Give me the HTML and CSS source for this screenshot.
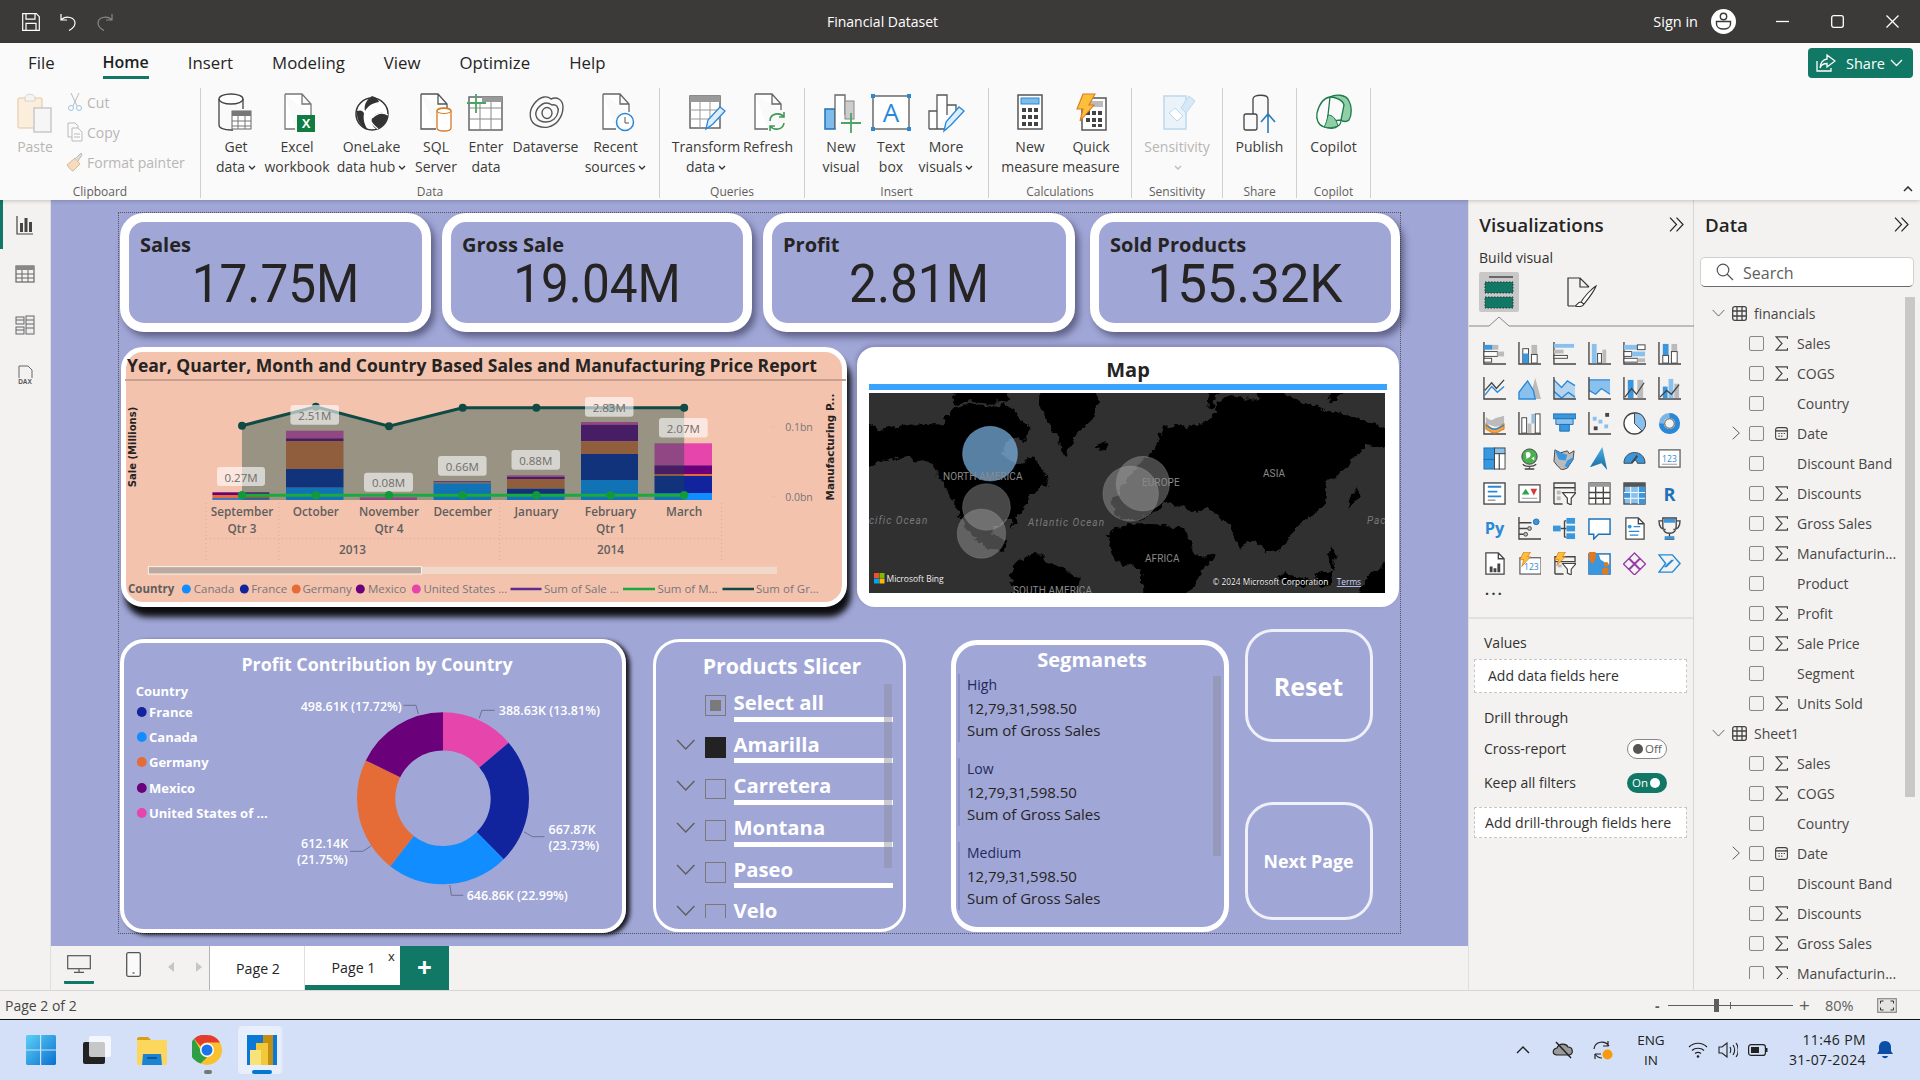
FILE: index.html
```html
<!DOCTYPE html>
<html lang="en">
<head>
<meta charset="utf-8">
<title>Financial Dataset - Power BI Desktop</title>
<link rel="stylesheet" href="styles.css">
</head>
<body>
<svg class="defs" aria-hidden="true">
  <symbol id="sig" viewBox="0 0 13 15"><path d="M12.5 3V.8H1l6 6.7L1 14.2h11.5V12" fill="none" stroke="#444" stroke-width="1.2"/></symbol>
  <symbol id="cal" viewBox="0 0 15 15"><rect x=".7" y=".7" width="13.6" height="13.6" rx="2.5" fill="none" stroke="#444" stroke-width="1.3"/><path d="M1 4.5h13" stroke="#444" stroke-width="1.6"/><path d="M4 7.5h1.5M7 7.5h1.5M10 7.5h1.5M4 10.5h1.5M7 10.5h1.5" stroke="#444" stroke-width="1.3"/></symbol>
  <symbol id="tbl" viewBox="0 0 15 15"><rect x=".7" y=".7" width="13.6" height="13.6" rx="2" fill="none" stroke="#444" stroke-width="1.3"/><path d="M.7 5h13.6M.7 10h13.6M5 .7v13.6M10 .7v13.6" stroke="#444" stroke-width="1.3"/></symbol>
  <symbol id="chr" viewBox="0 0 8 14"><path d="M.7.7 7.3 7 .7 13.3" fill="none" stroke="#605e5c" stroke-width="1"/></symbol>
  <symbol id="chd" viewBox="0 0 14 8"><path d="M.7.7 7 7.3 13.3.7" fill="none" stroke="#605e5c" stroke-width="1"/></symbol>
  <symbol id="dd" viewBox="0 0 8 6"><path d="M1 1l3 3 3-3" fill="none" stroke="#333" stroke-width="1.4"/></symbol>
  <symbol id="dbl" viewBox="0 0 15 15"><path d="M1 .7 7.5 7.5 1 14.3M7.5.7 14 7.5 7.5 14.3" fill="none" stroke="#252423" stroke-width="1.2"/></symbol>
</svg>

<header class="titlebar">
  <div class="qa">
    <svg class="qa-save" viewBox="0 0 18 18"><path d="M.7.7h13.6l3 3v13.6H.7zM4 .7v5.5h9V.7M4 17.3v-7h10v7" fill="none" stroke="#fff" stroke-width="1.2"/></svg>
    <svg class="qa-undo" viewBox="0 0 16 18"><path d="M1 1v6h6M1.5 6.5C6 2.5 15 4 15 10c0 3-2 5.500-6 7.500" fill="none" stroke="#fff" stroke-width="1.2"/></svg>
    <svg class="qa-redo" viewBox="0 0 16 18"><path d="M15 1v6H9M14.500 6.500C10 2.500 1 4 1 10c0 3 2 5.500 6 7.500" fill="none" stroke="#8a8886" stroke-width="1.2"/></svg>
  </div>
  <div class="doc-title">Financial Dataset</div>
  <div class="win">
    <span class="signin">Sign in</span>
    <svg class="avatar" viewBox="0 0 25 25"><circle cx="12.500" cy="12.500" r="12.500" fill="#fff"/><circle cx="12.500" cy="7.500" r="3.200" fill="none" stroke="#3b3a39" stroke-width="1.400"/><path d="M5.500 12.500h14v2.500c0 3-3 5-7 5s-7-2-7-5z" fill="none" stroke="#3b3a39" stroke-width="1.400"/></svg>
    <svg class="wc wc-min" viewBox="0 0 13 13"><path d="M0 6.500h13" stroke="#fff" stroke-width="1.300"/></svg>
    <svg class="wc wc-max" viewBox="0 0 13 13"><rect x=".7" y=".7" width="11.600" height="11.600" rx="2" fill="none" stroke="#fff" stroke-width="1.300"/></svg>
    <svg class="wc wc-x" viewBox="0 0 13 13"><path d="M.5.500l12 12M12.500.500l-12 12" stroke="#fff" stroke-width="1.300"/></svg>
  </div>
</header>

<section class="ribbon">
  <nav class="tabs">
    <span>File</span><span class="tab-on">Home</span><span>Insert</span><span>Modeling</span><span>View</span><span>Optimize</span><span>Help</span>
  </nav>
  <a class="share">
    <svg class="share-i" viewBox="0 0 20 18"><path d="M1 7v10h14v-3" fill="none" stroke="#fff" stroke-width="1.300"/><path d="M11 1l8 6-8 6v-3.500C7 9.500 5 11 4 14c0-5 3-8.500 7-9z" fill="none" stroke="#fff" stroke-width="1.300"/></svg>
    <span>Share</span>
    <svg class="share-c" viewBox="0 0 13 8"><path d="M1 1l5.500 5.500L12 1" fill="none" stroke="#fff" stroke-width="1.300"/></svg>
  </a>
  <div class="rb-body">
    <div class="grp g-clip">
      <div class="grp-main clip-main">
        <div class="rb rb-paste off">
          <svg class="ic" viewBox="0 0 36 40"><rect x="1" y="5" width="24" height="30" rx="2" fill="#fbeedd" stroke="#ecd5b8" stroke-width="1.500"/><path d="M8 5c0-5 10-5 10 0v3H8z" fill="#f7f3ee" stroke="#d8d4cf"/><rect x="17" y="15" width="17" height="24" fill="#f6f6f6" stroke="#c9c9c9" stroke-width="1.500"/></svg>
          <span>Paste</span>
        </div>
        <div class="clip-list off">
          <div class="clip-it"><svg class="ci" viewBox="0 0 16 20"><path d="M4 1l6 13M12 1L6 14" stroke="#bbb" fill="none"/><circle cx="4" cy="16" r="2.500" fill="none" stroke="#9cc3e4"/><circle cx="12" cy="16" r="2.500" fill="none" stroke="#9cc3e4"/></svg><span>Cut</span></div>
          <div class="clip-it"><svg class="ci" viewBox="0 0 16 20"><path d="M1 1h7l3 3v3M1 1v14h4" fill="none" stroke="#bbb"/><path d="M5 6h6l4 4v9H5zM7 12h6M7 15h6" fill="#fbfbfb" stroke="#bbb"/></svg><span>Copy</span></div>
          <div class="clip-it"><svg class="ci" viewBox="0 0 16 20"><path d="M0 13l8-7 5 6-7 7c-2-1-4-3-6-6z" fill="#f6dcbf" stroke="#dcb48a"/><path d="M9 6l5-5 1 2-4 6" fill="#ddd" stroke="#bbb"/></svg><span>Format painter</span></div>
        </div>
      </div>
      <div class="grp-name">Clipboard</div>
    </div>

    <div class="grp g-data">
      <div class="grp-main data-main">
        <div class="rb"><svg class="ic" viewBox="0 0 40 40"><ellipse cx="15" cy="6" rx="12" ry="5" fill="#fff" stroke="#444" stroke-width="1.300"/><path d="M3 6v26c0 3 5 5 12 5h2M27 6v10" fill="none" stroke="#444" stroke-width="1.300"/><rect x="16" y="18" width="19" height="18" fill="#fff" stroke="#666"/><rect x="16" y="18" width="19" height="5" fill="#777"/><path d="M16 28h19M16 33h19M22 23v13M29 23v13" stroke="#777"/></svg><span>Get<br>data<svg class="dd"><use href="#dd"/></svg></span></div>
        <div class="rb"><svg class="ic" viewBox="0 0 40 40"><path d="M8 1h17l9 10v12M8 1v35h10M25 1v10h9" fill="#fff" stroke="#777" stroke-width="1.300"/><rect x="20" y="22" width="18" height="17" fill="#107c41"/><text class="xl" x="29" y="35">X</text></svg><span>Excel<br>workbook</span></div>
        <div class="rb"><svg class="ic" viewBox="0 0 40 40"><circle cx="20" cy="21" r="16" fill="#fff" stroke="#333" stroke-width="1.500"/><path d="M20 3c-7 5-8 10-7 15 3-5 7-8 14-9-1-3-3-5-7-6zM5 18c-1 9 4 16 11 19-4-6-5-11-4-17-2-3-4-3-7-2zM36 22c-4-3-11-4-16 3-1 4 0 8 4 11 7-2 11-7 12-14z" fill="#333"/><path d="M14 18c2 7 5 13 12 18M20 25c5-5 11-6 16-3" fill="none" stroke="#fff" stroke-width="1.200"/></svg><span>OneLake<br>data hub<svg class="dd"><use href="#dd"/></svg></span></div>
        <div class="rb"><svg class="ic" viewBox="0 0 40 40"><path d="M5 1h17l9 10v7M5 1v35h15M22 1v10h9" fill="#fff" stroke="#555" stroke-width="1.300"/><path d="M21 18c0-4 14-4 14 0v17c0 4-14 4-14 0z" fill="#fff" stroke="#d97a21" stroke-width="1.300"/><ellipse cx="28" cy="18" rx="7" ry="2.500" fill="none" stroke="#d97a21"/></svg><span>SQL<br>Server</span></div>
        <div class="rb"><svg class="ic" viewBox="0 0 40 40"><rect x="3" y="4" width="33" height="33" fill="#fff" stroke="#666" stroke-width="1.500"/><rect x="16" y="4" width="20" height="5" fill="#999"/><path d="M3 15h33M3 26h33M14 9v28M25 9v28" stroke="#888"/><path d="M10 1v19M1 10h19" stroke="#4aa564" stroke-width="1.800"/></svg><span>Enter<br>data</span></div>
        <div class="rb"><svg class="ic" viewBox="0 0 40 40"><g fill="none" stroke="#555" stroke-width="1.400"><path d="M8 11c7-9 14-8 17-5 6-3 12 1 12 8 0 5-1 9-5 14-5 6-13 8-20 5C3 30 2 19 8 11z"/><path d="M12 15c5-6 10-6 14-3 4-1 7 2 6 7-1 6-6 10-12 10-9 0-13-7-8-14z"/><ellipse cx="21" cy="20" rx="5" ry="5.500"/></g></svg><span>Dataverse</span></div>
        <div class="rb"><svg class="ic" viewBox="0 0 40 40"><path d="M7 1h17l9 10v8M7 1v35h13M24 1v10h9" fill="#fff" stroke="#666" stroke-width="1.300"/><circle cx="29" cy="29" r="8.500" fill="#fff" stroke="#2b88d8" stroke-width="1.500"/><path d="M29 24v6h4" fill="none" stroke="#555"/></svg><span>Recent<br>sources<svg class="dd"><use href="#dd"/></svg></span></div>
      </div>
      <div class="grp-name">Data</div>
    </div>

    <div class="grp g-query">
      <div class="grp-main query-main">
        <div class="rb"><svg class="ic" viewBox="0 0 40 40"><rect x="4" y="3" width="30" height="32" fill="#fff" stroke="#666" stroke-width="1.500"/><rect x="4" y="3" width="30" height="6" fill="#999"/><path d="M4 17h30M4 26h30M14 9v26M24 9v26" stroke="#999"/><path d="M20 36l2-9L34 14l5 4-12 13z" fill="#dceefb" stroke="#2b88d8" stroke-width="1.300"/></svg><span>Transform<br>data<svg class="dd"><use href="#dd"/></svg></span></div>
        <div class="rb"><svg class="ic" viewBox="0 0 40 40"><path d="M7 1h17l9 10v6M7 1v35h13M24 1v10h9" fill="#fff" stroke="#666" stroke-width="1.300"/><path d="M22 28c0-8 10-9 14-4M36 30c-1 7-10 8-14 3M36 19v5h-5M22 38v-5h5" fill="none" stroke="#3f9a59" stroke-width="1.600"/></svg><span>Refresh</span></div>
      </div>
      <div class="grp-name">Queries</div>
    </div>

    <div class="grp g-ins">
      <div class="grp-main ins-main">
        <div class="rb"><svg class="ic" viewBox="0 0 40 40"><rect x="4" y="16" width="10" height="20" fill="#7ebcec" stroke="#1f72b8" stroke-width="1.500"/><path d="M14 36V2h10v20" fill="#fff" stroke="#666" stroke-width="1.300"/><rect x="24" y="8" width="9" height="18" fill="#ccc" stroke="#888"/><path d="M30 20v20M20 30h20" stroke="#4aa564" stroke-width="1.800"/></svg><span>New<br>visual</span></div>
        <div class="rb"><svg class="ic" viewBox="0 0 40 40"><rect x="2" y="3" width="36" height="33" fill="#fff" stroke="#555" stroke-width="1.300"/><path d="M0 1h4v4H0zM36 1h4v4h-4zM0 34h4v4H0zM36 34h4v4h-4z" fill="#2b88d8"/><text class="tb" x="20" y="29">A</text></svg><span>Text<br>box</span></div>
        <div class="rb"><svg class="ic" viewBox="0 0 40 40"><path d="M3 36V18h8v18M11 36V2h10v20M21 12h9v10M3 36h18" fill="#fff" stroke="#555" stroke-width="1.300"/><path d="M18 38l2-9L33 14l5 4-13 14z" fill="#dceefb" stroke="#2b88d8" stroke-width="1.300"/></svg><span>More<br>visuals<svg class="dd"><use href="#dd"/></svg></span></div>
      </div>
      <div class="grp-name">Insert</div>
    </div>

    <div class="grp g-calc">
      <div class="grp-main calc-main">
        <div class="rb"><svg class="ic" viewBox="0 0 40 40"><rect x="8" y="2" width="24" height="34" fill="#fff" stroke="#555" stroke-width="1.500"/><rect x="11" y="5" width="18" height="6" fill="#7ebcec" stroke="#2b88d8"/><path d="M12 15h4v4h-4zM18 15h4v4h-4zM24 15h4v4h-4zM12 22h4v4h-4zM18 22h4v4h-4zM24 22h4v4h-4zM12 29h4v4h-4zM18 29h4v4h-4zM24 29h4v4h-4z" fill="#444"/></svg><span>New<br>measure</span></div>
        <div class="rb"><svg class="ic" viewBox="0 0 40 40"><rect x="11" y="5" width="24" height="32" fill="#fff" stroke="#555" stroke-width="1.500"/><rect x="18" y="8" width="14" height="6" fill="#bbb"/><path d="M15 18h4v4h-4zM21 18h4v4h-4zM27 18h4v4h-4zM15 25h4v4h-4zM21 25h4v4h-4zM27 25h4v4h-4zM21 31h4v3h-4zM27 31h4v3h-4z" fill="#444"/><path d="M12 1h12l-6 11h5L9 28l3-12H6z" fill="#fbbf3c" stroke="#d97a21" stroke-width="1.100"/></svg><span>Quick<br>measure</span></div>
      </div>
      <div class="grp-name">Calculations</div>
    </div>

    <div class="grp g-sens">
      <div class="grp-main sens-main">
        <div class="rb off"><svg class="ic" viewBox="0 0 40 40"><rect x="7" y="3" width="22" height="33" fill="#eaf3fa" stroke="#bcd9ee" stroke-width="1.500"/><path d="M12 20l8 8 6-5-8-8z" fill="#fff" stroke="#bcd9ee"/><path d="M24 15l8-12 6 5-9 12z" fill="#d7e9f6" stroke="#bcd9ee"/></svg><span>Sensitivity<br><svg class="dd dd-off"><use href="#dd"/></svg></span></div>
      </div>
      <div class="grp-name">Sensitivity</div>
    </div>

    <div class="grp g-share">
      <div class="grp-main share-main">
        <div class="rb"><svg class="ic" viewBox="0 0 40 40"><path d="M13 37V6c0-5 15-5 15 0v18" fill="none" stroke="#444" stroke-width="1.300"/><rect x="4" y="21" width="13" height="16" rx="2" fill="#fafafa" stroke="#444" stroke-width="1.300"/><path d="M28 40V22M21 29l7-8 7 8" fill="none" stroke="#2b7cb8" stroke-width="1.600"/></svg><span>Publish</span></div>
      </div>
      <div class="grp-name">Share</div>
    </div>

    <div class="grp g-cop">
      <div class="grp-main cop-main">
        <div class="rb"><svg class="ic" viewBox="0 0 40 40"><path d="M16 4c5-3 16-3 19 4 3 5 3 14 0 19-2 2-6 2-8 0l3-15c-1-5-9-8-14-8z" fill="#8fcfa6" stroke="#1f7a4a" stroke-width="1.300"/><path d="M16 4C9 5 5 12 3 20c-1 6 1 12 7 14 5 2 11 2 14-1 2-1 3-4 3-6l-10 1c-3 0-4-3-3-6z" fill="#fafafa" stroke="#1f7a4a" stroke-width="1.300"/><path d="M14 22c4 0 8 3 10 11-5 2-10 2-14 1 2-3 3-7 4-12z" fill="#8fcfa6" stroke="#1f7a4a"/></svg><span>Copilot</span></div>
      </div>
      <div class="grp-name">Copilot</div>
    </div>
  </div>
  <svg class="collapse" viewBox="0 0 10 6"><path d="M1 5l4-4 4 4" fill="none" stroke="#333" stroke-width="1.600"/></svg>
</section>

<main class="main">
  <aside class="rail">
    <div class="rail-b rail-on"><svg class="rail-i" viewBox="0 0 20 20"><path d="M2 1v18h16" fill="none" stroke="#444" stroke-width="1.200"/><path d="M5 8h3v9H5zM9.500 3h3v14h-3zM14 7h3v10h-3z" fill="#444"/></svg></div>
    <div class="rail-b"><svg class="rail-i" viewBox="0 0 20 20"><rect x="1" y="2" width="18" height="16" fill="none" stroke="#666" stroke-width="1.200"/><rect x="1" y="2" width="18" height="4" fill="#888"/><path d="M1 10h18M1 14h18M7 6v12M13 6v12" stroke="#666"/></svg></div>
    <div class="rail-b"><svg class="rail-i" viewBox="0 0 20 20"><g fill="#eee" stroke="#666"><rect x="1" y="2" width="8" height="7"/><rect x="11" y="1" width="8" height="18"/><rect x="1" y="12" width="8" height="7"/></g><path d="M11 5h8M11 9h8M11 13h8M1 5h8M1 15h8" stroke="#666"/></svg></div>
    <div class="rail-b"><svg class="rail-i" viewBox="0 0 20 20"><path d="M4 13V1h9l4 4v8" fill="none" stroke="#666"/><text class="dax" x="10" y="19">DAX</text></svg></div>
  </aside>

  <div class="center">
    <div class="canvas">
      <div class="page">

        <div class="kpi kpi-1"><div class="kpi-l">Sales</div><div class="kpi-v">17.75M</div></div>
        <div class="kpi kpi-2"><div class="kpi-l">Gross Sale</div><div class="kpi-v">19.04M</div></div>
        <div class="kpi kpi-3"><div class="kpi-l">Profit</div><div class="kpi-v">2.81M</div></div>
        <div class="kpi kpi-4"><div class="kpi-l">Sold Products</div><div class="kpi-v kpi-wide">155.32K</div></div>

        <div class="chart-card">
          <div class="chart-title">Year, Quarter, Month and Country Based Sales and Manufacturing Price Report</div>
          <svg class="chart-svg" viewBox="115 342 736 270">
            <g class="gridl">
              <path d="M205 503v57M278 503v57M498.500 503v57M720.500 503v57M205 538.700h515.500"/>
            </g>
            <path class="yt" d="M770 427h6M770 496.700h6"/>
            <!-- bars -->
            <g class="c-us"><rect x="285" y="430.700" width="57.500" height="7.600"/><rect x="358.800" y="497.300" width="57.200" height="2.700"/><rect x="506" y="475.300" width="57.600" height="1.700"/><rect x="580" y="422" width="57" height="2.700"/><rect x="653.500" y="443.300" width="57.500" height="22"/></g>
            <g class="c-mx"><rect x="211.400" y="492.300" width="57" height="2.700"/><rect x="285" y="438.300" width="57.500" height="2.700"/><rect x="506" y="477" width="57.600" height="2"/><rect x="580" y="424.700" width="57" height="16.600"/><rect x="653.500" y="465.300" width="57.500" height="8.700"/><rect x="432.500" y="481.300" width="57.500" height="1"/></g>
            <g class="c-de"><rect x="211.400" y="495" width="57" height="3.500"/><rect x="285" y="441" width="57.500" height="28"/><rect x="506" y="479" width="57.600" height="9.700"/><rect x="580" y="441.300" width="57" height="12.700"/><rect x="653.500" y="474" width="57.500" height="2"/><rect x="432.500" y="482.300" width="57.500" height="1"/></g>
            <g class="c-fr"><rect x="211.400" y="498.500" width="57" height=".5"/><rect x="285" y="469" width="57.500" height="18.700"/><rect x="506" y="488.700" width="57.600" height="5.300"/><rect x="580" y="454" width="57" height="26"/><rect x="653.500" y="476" width="57.500" height="17"/></g>
            <g class="c-ca"><rect x="211.400" y="499" width="57" height="1"/><rect x="285" y="487.700" width="57.500" height="12.300"/><rect x="432.500" y="483.300" width="57.500" height="16.700"/><rect x="506" y="494" width="57.600" height="6"/><rect x="580" y="480" width="57" height="20"/><rect x="653.500" y="493" width="57.500" height="7"/></g>
            <path class="area" d="M241 425.700 314.800 406.700 388 426.300 461.700 407.700 535.400 407.700 609.500 407.700 683.200 407.700V500H241z"/>
            <polyline class="ln-dk" points="241,425.700 314.800,406.700 388,426.300 461.700,407.700 535.400,407.700 609.500,407.700 683.200,407.700"/>
            <g class="mk-dk"><circle cx="241" cy="425.700" r="4"/><circle cx="314.800" cy="406.700" r="4"/><circle cx="388" cy="426.300" r="4"/><circle cx="461.700" cy="407.700" r="4"/><circle cx="535.400" cy="407.700" r="4"/><circle cx="609.500" cy="407.700" r="4"/><circle cx="683.200" cy="407.700" r="4"/></g>
            <!-- label plates -->
            <g class="plate"><rect x="216" y="467" width="48" height="19" rx="3"/><rect x="289.400" y="405" width="48.600" height="19.700" rx="3"/><rect x="363" y="472.700" width="49" height="19" rx="3"/><rect x="437" y="456" width="48.600" height="19.700" rx="3"/><rect x="510.500" y="450" width="48.500" height="19.700" rx="3"/><rect x="584" y="397" width="48.500" height="19.700" rx="3"/><rect x="658" y="418" width="48.700" height="19.500" rx="3"/></g>
            <polyline class="ln-gr" points="241,495.300 683.200,495.300"/>
            <g class="mk-gr"><circle cx="241" cy="495.300" r="4.200"/><circle cx="314.800" cy="495.300" r="4.200"/><circle cx="388" cy="495.300" r="4.200"/><circle cx="461.700" cy="495.300" r="4.200"/><circle cx="535.400" cy="495.300" r="4.200"/><circle cx="609.500" cy="495.300" r="4.200"/><circle cx="683.200" cy="495.300" r="4.200"/></g>
            <g class="dl">
              <text x="240" y="481.500">0.27M</text><text x="313.700" y="419.800">2.51M</text><text x="387.500" y="487">0.08M</text><text x="461.300" y="470.800">0.66M</text><text x="534.700" y="464.800">0.88M</text><text x="608.200" y="411.800">2.83M</text><text x="682.300" y="432.600">2.07M</text>
            </g>
            <g class="ax">
              <text x="241" y="516.200">September</text><text x="314.800" y="516.200">October</text><text x="388" y="516.200">November</text><text x="461.700" y="516.200">December</text><text x="535.400" y="516.200">January</text><text x="609.500" y="516.200">February</text><text x="683.200" y="516.200">March</text>
              <text x="241" y="533">Qtr 3</text><text x="388" y="533">Qtr 4</text><text x="609.500" y="533">Qtr 1</text>
              <text x="351.600" y="554">2013</text><text x="609.500" y="554">2014</text>
            </g>
            <text class="ax-t ax-s" transform="translate(134.500 447) rotate(-90)">Sale (Millions)</text>
            <text class="ax-t" transform="translate(833 447) rotate(-90)">Manufacturing P...</text>
            <text class="ax-y" x="798" y="431">0.1bn</text><text class="ax-y" x="798" y="500.700">0.0bn</text>
            <rect class="sb" x="147.300" y="566.700" width="628.700" height="7.300"/>
            <rect class="sb-t" x="147.300" y="566.700" width="273.200" height="7.300"/>
            <text class="lg lg-h" x="127" y="593.300">Country</text>
            <circle class="c-ca" cx="185.300" cy="589" r="4.500"/><text class="lg" x="192.800" y="593">Canada</text>
            <circle class="c-fr" cx="243.300" cy="589" r="4.500"/><text class="lg" x="250.200" y="593">France</text>
            <circle class="c-de" cx="295.200" cy="589" r="4.500"/><text class="lg" x="301.400" y="593">Germany</text>
            <circle class="c-mx" cx="359.300" cy="589" r="4.500"/><text class="lg" x="367" y="593">Mexico</text>
            <circle class="c-us" cx="415.300" cy="589" r="4.500"/><text class="lg" x="422.400" y="593">United States ...</text>
            <path class="lg-p" d="M509.500 589h31"/><text class="lg" x="543" y="593">Sum of Sale ...</text>
            <path class="lg-g" d="M622 589h32"/><text class="lg" x="656.400" y="593">Sum of M...</text>
            <path class="lg-d" d="M721.500 589h31.500"/><text class="lg" x="755" y="593">Sum of Gr...</text>
          </svg>
        </div>

        <div class="map-card">
          <div class="map-title">Map</div>
          <div class="map-rule"></div>
          <svg class="map-svg" viewBox="0 0 516 200">
            <defs><filter id="jag" x="-5%" y="-5%" width="110%" height="110%"><feTurbulence type="fractalNoise" baseFrequency=".04" numOctaves="4" seed="3"/><feDisplacementMap in="SourceGraphic" scale="30" xChannelSelector="R" yChannelSelector="G"/></filter></defs>
            <rect class="sea" width="516" height="200"/>
            <g class="land" filter="url(#jag)" transform="scale(.357 .3333) translate(-53 -158)">
              <path d="M30 240 75 270 115 262 180 252 262 256 284 205 335 190 392 200 435 190 472 228 505 258 490 298 445 296 422 340 470 372 515 345 548 402 552 432 505 468 476 508 456 566 450 538 404 556 398 578 424 592 446 606 432 634 384 622 344 592 312 534 292 500 262 424 232 372 172 352 118 352 30 390z"/>
              <path d="M282 170 330 130 420 130 450 182 385 190 330 182 290 195zM262 230 300 215 300 240 270 250z"/>
              <path d="M462 662 520 640 602 690 640 720 622 790 462 790 448 704z"/>
              <path d="M528 130 698 130 692 218 642 268 600 348 572 282 540 212z"/>
              <ellipse cx="706" cy="318" rx="15" ry="10"/>
              <path d="M1530 268 1340 210 1220 165 1130 178 1050 165 1000 240 960 262 915 252 880 262 850 330 820 360 785 410 735 475 745 530 805 538 870 500 902 484 970 522 1000 500 1062 552 1092 622 1138 600 1172 642 1212 622 1250 562 1298 522 1332 492 1340 420 1400 372 1440 320 1530 310z"/>
              <path d="M1010 130 1030 130 1020 200 1000 205zM1140 130 1230 130 1210 180 1150 175zM1330 130 1400 130 1350 190z"/>
              <path d="M722 582 762 552 862 552 932 562 982 652 1024 640 962 732 930 790 822 790 820 692 742 662z"/>
              <path d="M1210 695 1290 725 1270 740 1200 715zM1300 700 1350 690 1350 735 1310 740zM1400 470 1420 440 1426 475 1395 505zM1345 615 1360 640 1350 690 1338 650z"/>
              <path d="M1530 640 1440 720 1410 790 1530 790z"/>
            </g>
            <g transform="scale(.357 .3333) translate(-53 -158)">
              <ellipse class="bb-b" cx="392" cy="340" rx="77" ry="82"/>
              <ellipse class="bb-g" cx="382" cy="500" rx="67" ry="70"/>
              <ellipse class="bb-g" cx="368" cy="580" rx="68" ry="74"/>
              <ellipse class="bb-g" cx="786" cy="460" rx="78" ry="83"/>
              <ellipse class="bb-g" cx="820" cy="430" rx="75" ry="82"/>
            </g>
            <g class="m-l">
              <text x="74" y="87">NORTH AMERICA</text><text x="273" y="93">EUROPE</text><text x="394" y="84">ASIA</text><text x="276" y="169">AFRICA</text><text x="144" y="201">SOUTH AMERICA</text>
            </g>
            <g class="m-o"><text x="0" y="131">cific Ocean</text><text x="159" y="133">Atlantic Ocean</text><text x="498" y="131">Pac</text></g>
            <g><rect x="5" y="180" width="5" height="5" fill="#f25022"/><rect x="10.500" y="180" width="5" height="5" fill="#7fba00"/><rect x="5" y="185.500" width="5" height="5" fill="#00a4ef"/><rect x="10.500" y="185.500" width="5" height="5" fill="#ffb900"/></g>
            <text class="m-b" x="17.500" y="189">Microsoft Bing</text>
            <text class="m-c" x="343.500" y="192">© 2024 Microsoft Corporation</text>
            <text class="m-t" x="467.800" y="192">Terms</text>
          </svg>
        </div>

        <div class="donut-card">
          <svg class="donut-svg" viewBox="115 634 516 304">
            <text class="do-t" x="377" y="671">Profit Contribution by Country</text>
            <text class="do-h" x="135.700" y="695.500">Country</text>
            <circle class="c-fr" cx="141.800" cy="712" r="4.900"/><text class="do-li" x="149" y="716.800">France</text>
            <circle class="c-ca" cx="141.800" cy="737" r="4.900"/><text class="do-li" x="149" y="741.800">Canada</text>
            <circle class="c-de" cx="141.800" cy="762" r="4.900"/><text class="do-li" x="149" y="766.800">Germany</text>
            <circle class="c-mx" cx="141.800" cy="788" r="4.900"/><text class="do-li" x="149" y="792.500">Mexico</text>
            <circle class="c-us" cx="141.800" cy="813" r="4.900"/><text class="do-li" x="149" y="817.500">United States of ...</text>
            <g class="ring" transform="rotate(-90 443 798.300)">
              <circle class="r-us" cx="443" cy="798.300" r="66.850" pathLength="100" stroke-dasharray="13.810 100"/>
              <circle class="r-fr" cx="443" cy="798.300" r="66.850" pathLength="100" stroke-dasharray="23.730 100" stroke-dashoffset="-13.810"/>
              <circle class="r-ca" cx="443" cy="798.300" r="66.850" pathLength="100" stroke-dasharray="22.990 100" stroke-dashoffset="-37.540"/>
              <circle class="r-de" cx="443" cy="798.300" r="66.850" pathLength="100" stroke-dasharray="21.750 100" stroke-dashoffset="-60.530"/>
              <circle class="r-mx" cx="443" cy="798.300" r="66.850" pathLength="100" stroke-dasharray="17.720 100" stroke-dashoffset="-82.280"/>
            </g>
            <g class="lead"><polyline points="403.400,705.300 416,705.300 418.300,714"/><polyline points="494.700,710.300 481.900,710.300 479.200,718.300"/><polyline points="544.400,836.700 532.600,836.700 524.100,832"/><polyline points="350,851.300 362.900,851.300 371,846"/><polyline points="463.300,895.300 451.400,895.300 449.800,885"/></g>
            <g class="do-v">
              <text x="300.700" y="711">498.61K (17.72%)</text><text x="498.800" y="715">388.63K (13.81%)</text><text x="548.500" y="833.500">667.87K</text><text x="548.500" y="849.500">(23.73%)</text><text x="301" y="848">612.14K</text><text x="297" y="864">(21.75%)</text><text x="466.700" y="900">646.86K (22.99%)</text>
            </g>
          </svg>
        </div>

        <div class="slicer">
          <div class="sl-title">Products Slicer</div>
          <div class="sl-list">
            <div class="sl-row"><span class="sl-ch"></span><span class="sl-cb sl-part"></span><span class="sl-lb">Select all</span></div>
            <div class="sl-row"><svg class="sl-ch"><use href="#chd"/></svg><span class="sl-cb sl-full"></span><span class="sl-lb">Amarilla</span></div>
            <div class="sl-row"><svg class="sl-ch"><use href="#chd"/></svg><span class="sl-cb"></span><span class="sl-lb">Carretera</span></div>
            <div class="sl-row"><svg class="sl-ch"><use href="#chd"/></svg><span class="sl-cb"></span><span class="sl-lb">Montana</span></div>
            <div class="sl-row"><svg class="sl-ch"><use href="#chd"/></svg><span class="sl-cb"></span><span class="sl-lb">Paseo</span></div>
            <div class="sl-row"><svg class="sl-ch"><use href="#chd"/></svg><span class="sl-cb"></span><span class="sl-lb">Velo</span></div>
            <div class="sl-sb"></div>
          </div>
        </div>

        <div class="seg">
          <div class="seg-title">Segmanets</div>
          <div class="seg-c"><div class="seg-h">High</div><div class="seg-n">12,79,31,598.50</div><div class="seg-n">Sum of Gross Sales</div></div>
          <div class="seg-c"><div class="seg-h">Low</div><div class="seg-n">12,79,31,598.50</div><div class="seg-n">Sum of Gross Sales</div></div>
          <div class="seg-c"><div class="seg-h">Medium</div><div class="seg-n">12,79,31,598.50</div><div class="seg-n">Sum of Gross Sales</div></div>
          <div class="seg-sb"></div>
        </div>

        <div class="pbtn pbtn-reset">Reset</div>
        <div class="pbtn pbtn-next">Next Page</div>
      </div>
    </div>

    <div class="pagebar">
      <div class="pb-views">
        <div class="pb-desk"><svg class="pb-d" viewBox="0 0 24 18"><rect x=".7" y=".7" width="22.600" height="13" fill="none" stroke="#555" stroke-width="1.200"/><path d="M12 14v3M7 17.300h10" stroke="#555" stroke-width="1.200"/></svg></div>
        <svg class="pb-p" viewBox="0 0 15 25"><rect x=".7" y=".7" width="13.600" height="23.600" rx="1.500" fill="#fafafa" stroke="#555" stroke-width="1.300"/><path d="M6.500 21h2" stroke="#555" stroke-width="1.300"/></svg>
        <svg class="pb-a" viewBox="0 0 6 10"><path d="M6 0v10L0 5z" fill="#c8c6c4"/></svg>
        <svg class="pb-a pb-r" viewBox="0 0 6 10"><path d="M0 0v10l6-5z" fill="#c8c6c4"/></svg>
      </div>
      <div class="pg-tab">Page 2</div>
      <div class="pg-tab pg-on">Page 1<span class="pg-x">x</span></div>
      <div class="pg-add">+</div>
    </div>
  </div>

  <aside class="viz">
    <div class="pane-h"><span>Visualizations</span><svg class="dbl"><use href="#dbl"/></svg></div>
    <div class="viz-sub">Build visual</div>
    <div class="viz-tabs">
      <div class="vt-on"><svg class="vt-i" viewBox="0 0 30 34"><path d="M5 1h24" stroke="#333" stroke-width="1.300"/><rect x="1" y="6" width="28" height="11" fill="#117865" stroke="#333" stroke-dasharray="1.500 1.500"/><rect x="1" y="21" width="28" height="11" fill="#117865" stroke="#333" stroke-dasharray="1.500 1.500"/></svg></div>
      <svg class="vt-f" viewBox="0 0 30 30"><path d="M1 29V1h12l9 9M1 29h6M13 1v9h9" fill="none" stroke="#333" stroke-width="1.200"/><path d="M29 9c-5 3-12 11-15 16l3 2c4-5 10-12 12-18zM14 25c-3 0-4 3-6 4 3 1 8 1 9-2z" fill="#fff" stroke="#333" stroke-width="1.100"/></svg>
      <svg class="vt-sep" viewBox="0 0 225 12" preserveAspectRatio="none"><path d="M0 11h20l10-9 10 9h185" fill="none" stroke="#8a8886" stroke-width="1"/></svg>
    </div>
    <div class="vgrid">
      <svg class="vi" viewBox="0 0 24 24"><path class="s" d="M1 0v23h23"/><rect class="b" x="1" y="3" width="9" height="5"/><rect class="g" x="10" y="3" width="6" height="5"/><rect class="w" x="1" y="10" width="14" height="5"/><rect class="g" x="15" y="10" width="7" height="5"/><rect class="w" x="1" y="17" width="8" height="4"/></svg>
      <svg class="vi" viewBox="0 0 24 24"><path class="s" d="M1 0v23h23"/><rect class="w" x="5" y="7" width="6" height="15"/><rect class="b" x="5" y="12" width="6" height="10"/><rect class="g" x="14" y="3" width="6" height="10"/><rect class="w" x="14" y="13" width="6" height="9"/></svg>
      <svg class="vi" viewBox="0 0 24 24"><path class="s" d="M1 0v23h23"/><rect class="l" x="1" y="2" width="21" height="4"/><rect class="g" x="1" y="8" width="10" height="4"/><rect class="w" x="1" y="14" width="14" height="3"/></svg>
      <svg class="vi" viewBox="0 0 24 24"><path class="s" d="M1 0v23h23"/><rect class="l" x="4" y="2" width="5" height="20"/><rect class="w" x="10" y="12" width="4" height="10"/><rect class="g" x="15" y="8" width="4" height="14"/></svg>
      <svg class="vi" viewBox="0 0 24 24"><path class="s" d="M1 0v23h23"/><rect class="l" x="1" y="3" width="14" height="5"/><rect class="w" x="15" y="3" width="8" height="5"/><rect class="w" x="1" y="10" width="8" height="5"/><rect class="l" x="9" y="10" width="14" height="5"/><rect class="w" x="1" y="17" width="14" height="4"/><rect class="g" x="15" y="17" width="8" height="4"/></svg>
      <svg class="vi" viewBox="0 0 24 24"><path class="s" d="M1 0v23h23"/><rect class="b" x="5" y="2" width="6" height="12"/><rect class="w" x="5" y="14" width="6" height="8"/><rect class="g" x="14" y="2" width="6" height="8"/><rect class="w" x="14" y="10" width="6" height="12"/></svg>

      <svg class="vi" viewBox="0 0 24 24"><path class="s" d="M1 0v23h23M2 14l7-8 5 6 8-9"/><path class="sb2" d="M2 19l7-9 6 6 7-6"/></svg>
      <svg class="vi" viewBox="0 0 24 24"><path class="g" d="M12 23l6-22 6 22z"/><path class="l" d="M1 23V16L10 4l6 10 2 9z"/><path class="sb2" d="M1 23V16L10 4l6 10 2 9z"/></svg>
      <svg class="vi" viewBox="0 0 24 24"><path class="l" d="M1 16V3l8 8 6-7 8 5v14H1z" opacity=".6"/><path class="sb2" d="M1 3l8 8 6-7 8 5M1 15l8 7 7-6 7 5"/><path class="s" d="M1 0v23h23"/></svg>
      <svg class="vi" viewBox="0 0 24 24"><path class="l" d="M1 3h22v15l-9-6-6 6-7-4z"/><path class="sb2" d="M1 3h22M1 14l7 4 6-6 9 6"/><path class="s" d="M1 0v23h23"/></svg>
      <svg class="vi" viewBox="0 0 24 24"><path class="s" d="M1 0v23h23"/><rect class="b" x="5" y="3" width="6" height="19"/><rect class="g" x="15" y="3" width="6" height="19"/><path class="s" d="M2 21l7-9 5 6 8-12"/></svg>
      <svg class="vi" viewBox="0 0 24 24"><path class="s" d="M1 0v23h23"/><rect class="b" x="5" y="10" width="5" height="12"/><rect class="l" x="11" y="2" width="5" height="20"/><rect class="g" x="17" y="7" width="5" height="15"/><path class="s" d="M2 21l7-7 5 4 8-10"/></svg>

      <svg class="vi" viewBox="0 0 24 24"><path class="s" d="M1 0v23h23"/><path class="g" d="M3 5c4 4 6 4 9 2s5-1 10-3v8c-4 2-6 4-10 3s-6-2-9-3z"/><path d="M3 12c3 2 5 6 9 6s6-4 10-6v6c-4 1-6 4-10 4s-6-3-9-4z" fill="#f7a23a" stroke="#d97a21"/><path class="sb2" d="M3 14c3 1 5 4 9 4s6-3 10-4"/></svg>
      <svg class="vi" viewBox="0 0 24 24"><path class="s" d="M1 0v23h23"/><rect class="w" x="4" y="6" width="5" height="16"/><rect class="g" x="10" y="12" width="4" height="10"/><rect class="l" x="14" y="2" width="3" height="10"/><rect class="w" x="18" y="2" width="5" height="20"/></svg>
      <svg class="vi" viewBox="0 0 24 24"><path d="M0 2h24v5H0z" fill="#3a96dd" stroke="#1f72b8"/><path d="M3 7h18v6H3z" fill="#8ac0ee" stroke="#1f72b8"/><path d="M7 13h10v7H7z" fill="#3a96dd" stroke="#1f72b8"/></svg>
      <svg class="vi" viewBox="0 0 24 24"><path class="s" d="M1 0v23h23"/><rect class="l" x="5" y="5" width="4" height="4"/><rect class="l" x="11" y="8" width="4" height="4"/><rect class="d" x="18" y="1" width="4" height="4"/><rect class="d" x="6" y="15" width="4" height="4"/><rect class="l" x="17" y="13" width="4" height="4"/></svg>
      <svg class="vi" viewBox="0 0 24 24"><circle cx="12" cy="12" r="11" fill="#fff" stroke="#444" stroke-width="1.400"/><path class="l" d="M12 1a11 11 0 0 1 8 19l-8-8z" stroke="#444"/></svg>
      <svg class="vi" viewBox="0 0 24 24"><circle cx="12" cy="12" r="8.500" fill="none" stroke="#7ab5e8" stroke-width="5"/><path d="M12 3.500A8.500 8.500 0 1 1 3.500 12" fill="none" stroke="#2b88d8" stroke-width="5"/><circle cx="12" cy="12" r="5" fill="none" stroke="#444"/></svg>

      <svg class="vi" viewBox="0 0 24 24"><rect class="b" x="1" y="1" width="11" height="12" stroke="#1f72b8"/><rect class="b" x="1" y="13" width="11" height="10" stroke="#1f72b8"/><rect class="l" x="12" y="1" width="11" height="6" stroke="#444"/><rect class="w" x="12" y="7" width="5" height="16"/><rect class="w" x="17" y="7" width="6" height="16"/></svg>
      <svg class="vi" viewBox="0 0 24 24"><circle cx="12" cy="10" r="8" fill="#4caf50" stroke="#444"/><path d="M8 6c3-2 6 0 5 3s-3 1-4 4zM14 12l3-2 0 4z" fill="#fff"/><path class="s" d="M5 18c3 3 11 3 14 0M12 21v2M7 23h10"/></svg>
      <svg class="vi" viewBox="0 0 24 24"><path d="M2 3l6 3 7-2 2 3 5-3-1 9-6 9-6 2-5-5-3-4z" fill="#bbb" stroke="#444"/><path class="b" d="M2 3l6 3 7 2-2 6-7-1z"/><path class="b" d="M22 10l-1 3-6 8-3-1 3-6z"/></svg>
      <svg class="vi" viewBox="0 0 24 24"><defs><linearGradient id="nav" x1="0" y1="0" x2="0" y2="1"><stop offset="0" stop-color="#4fb0e6"/><stop offset="1" stop-color="#116a9e"/></linearGradient></defs><path d="M15 0 2 21l12-4 6 7z" fill="url(#nav)"/></svg>
      <svg class="vi" viewBox="0 0 24 24"><path d="M1 17c0-15 22-15 22 0H15c0-4-6-4-6 0z" fill="#3a96dd" stroke="#444"/><path d="M9 17l6-8" stroke="#444" stroke-width="2"/></svg>
      <svg class="vi" viewBox="0 0 24 24"><rect x="1" y="3" width="22" height="18" fill="#fff" stroke="#666" stroke-width="1.400"/><text class="v123" x="12" y="16">123</text><path d="M4 18h16" stroke="#999"/></svg>

      <svg class="vi" viewBox="0 0 24 24"><rect x="1" y="1" width="22" height="22" fill="#fff" stroke="#444" stroke-width="1.400"/><path d="M5 5h14M5 10h10M5 15h14" stroke="#2b88d8" stroke-width="2"/><path d="M5 19h8" stroke="#999" stroke-width="1.500"/></svg>
      <svg class="vi" viewBox="0 0 24 24"><rect x="1" y="3" width="22" height="18" fill="#fff" stroke="#555" stroke-width="1.400"/><path d="M4 13l4-6 4 6z" fill="#2da44e"/><path d="M13 7h7l-3.500 7z" fill="#d83b3b"/><path d="M4 17h16" stroke="#999"/></svg>
      <svg class="vi" viewBox="0 0 24 24"><path class="s" d="M1 23V1h22v9M1 6h22M1 23h9"/><rect class="g" x="4" y="9" width="4" height="4"/><rect class="g" x="4" y="15" width="4" height="4"/><path d="M10 11h14l-5 6v7l-4-2v-5z" fill="#fff" stroke="#444" stroke-width="1.300"/></svg>
      <svg class="vi" viewBox="0 0 24 24"><rect x="1" y="1" width="22" height="22" fill="#fff" stroke="#555" stroke-width="1.300"/><rect x="1" y="1" width="22" height="4" fill="#999"/><path class="s" d="M1 11h22M1 17h22M8 5v18M16 5v18"/></svg>
      <svg class="vi" viewBox="0 0 24 24"><rect x="1" y="1" width="22" height="22" fill="#8ac0ee" stroke="#444" stroke-width="1.300"/><rect x="1" y="1" width="22" height="4" fill="#555"/><rect class="b" x="1" y="11" width="7" height="6"/><rect class="b" x="16" y="5" width="7" height="18"/><path d="M1 11h22M1 17h22M8 5v18M16 5v18" stroke="#fff"/></svg>
      <svg class="vi" viewBox="0 0 24 24"><text class="vR" x="12" y="20">R</text></svg>

      <svg class="vi" viewBox="0 0 24 24"><text class="vPy" x="12" y="18">Py</text></svg>
      <svg class="vi" viewBox="0 0 24 24"><path class="s" d="M1 0v23h23M1 6h13M1 12h9M1 18h5"/><circle cx="19" cy="5" r="3" fill="#3a96dd" stroke="#1f72b8"/><circle cx="12" cy="12" r="2" fill="#bbb" stroke="#444"/><circle cx="8" cy="18" r="2" fill="#bbb" stroke="#444"/></svg>
      <svg class="vi" viewBox="0 0 24 24"><rect class="b" x="0" y="9" width="8" height="6"/><path class="s" d="M8 12h4M12 4v17M12 4h2M12 12h2M12 21h2"/><rect class="b" x="14" y="1" width="9" height="6"/><rect class="b" x="14" y="9" width="9" height="6"/><rect class="b" x="14" y="17" width="9" height="6"/></svg>
      <svg class="vi" viewBox="0 0 24 24"><path d="M1 2h22v16H11l-5 5v-5H1z" fill="#fff" stroke="#1f72b8" stroke-width="1.500"/></svg>
      <svg class="vi" viewBox="0 0 24 24"><path d="M3 1h13l6 6v16H3z" fill="#fff" stroke="#444" stroke-width="1.300"/><path class="s" d="M16 1v6h6"/><circle cx="7" cy="10" r="2" fill="#3a96dd"/><path d="M6 15h11M11 10h7M7 19h9" stroke="#2b88d8" stroke-width="1.300"/></svg>
      <svg class="vi" viewBox="0 0 24 24"><path class="s" d="M5 4H1c0 6 3 9 7 9M19 4h4c0 6-3 9-7 9M5 1h14v8c0 6-3 8-7 8s-7-2-7-8zM12 17v4M7 23h10"/><rect class="b" x="6" y="2" width="12" height="4"/><rect class="b" x="7" y="20" width="10" height="3"/></svg>

      <svg class="vi" viewBox="0 0 24 24"><path d="M3 1h13l6 6v16H3z" fill="#fff" stroke="#444" stroke-width="1.300"/><path class="s" d="M16 1v6h6"/><path class="d" d="M7 15h3v6H7zM11 17h3v4h-3zM15 12h3v9h-3z"/></svg>
      <svg class="vi" viewBox="0 0 24 24"><rect x="2" y="6" width="22" height="17" fill="#fff" stroke="#555" stroke-width="1.200"/><text class="v123" x="14" y="19">123</text><path d="M6 0h7l-3 5h3L4 15l2-7H2z" fill="#fbbf3c" stroke="#d97a21" stroke-width=".8"/></svg>
      <svg class="vi" viewBox="0 0 24 24"><path class="s" d="M2 23V5h21v6M2 10h21M2 23h9"/><rect class="g" x="5" y="13" width="4" height="3"/><path d="M10 12h14l-5 6v6l-4-2v-4z" fill="#fff" stroke="#444" stroke-width="1.200"/><path d="M6 0h7l-3 5h3L4 14l2-6H2z" fill="#fbbf3c" stroke="#d97a21" stroke-width=".8"/></svg>
      <svg class="vi" viewBox="0 0 24 24"><rect x="1" y="2" width="22" height="21" fill="#fff" stroke="#1f72b8" stroke-width="1.500"/><path class="b" d="M1 2h10c2 4 1 6 4 7s3 5 8 4v10H1z"/><path d="M1 0h7v7l-3.500 6L1 7z" fill="#e3791f"/><circle cx="19" cy="13" r="2.500" fill="#e3791f"/><circle cx="18" cy="20" r="3.500" fill="#e3791f"/></svg>
      <svg class="vi" viewBox="0 0 24 24"><path d="M12 1l5.500 5.500L12 12 6.500 6.500zM6 7l5.500 5.500L6 18 .5 12.500zM18 7l5.500 5.500L18 18l-5.500-5.500zM12 13l5.500 5.500L12 24l-5.500-5.500z" fill="none" stroke="#9a3ca8" stroke-width="1.400"/></svg>
      <svg class="vi" viewBox="0 0 24 24"><path d="M1 3h14l8 9-8 9H1l7-9z" fill="none" stroke="#1f8ad8" stroke-width="1.500"/><path d="M6 16L14 8h3L9 16z" fill="#1f8ad8"/></svg>
    </div>
    <div class="v-more">...</div>
    <div class="vbox">
      <div class="v-lab v-values">Values</div>
      <div class="well well-a">Add data fields here</div>
      <div class="v-lab v-drill">Drill through</div>
      <div class="opt opt-a"><span>Cross-report</span><span class="tg tg-off"><i></i>Off</span></div>
      <div class="opt opt-b"><span>Keep all filters</span><span class="tg tg-on">On<i></i></span></div>
      <div class="well well-b">Add drill-through fields here</div>
    </div>
  </aside>

  <aside class="data">
    <div class="pane-h"><span>Data</span><svg class="dbl"><use href="#dbl"/></svg></div>
    <div class="search"><svg class="s-ic" viewBox="0 0 18 18"><circle cx="7" cy="7" r="5.800" fill="none" stroke="#555" stroke-width="1.200"/><path d="M11 11l6 6" stroke="#555" stroke-width="1.200"/></svg><span>Search</span></div>
    <div class="tree">
      <div class="th"><svg class="t-ch"><use href="#chd"/></svg><svg class="t-ic"><use href="#tbl"/></svg><span>financials</span></div>
      <div class="tr"><span class="ex"></span><span class="cb"></span><svg class="fi"><use href="#sig"/></svg><span>Sales</span></div>
      <div class="tr"><span class="ex"></span><span class="cb"></span><svg class="fi"><use href="#sig"/></svg><span>COGS</span></div>
      <div class="tr"><span class="ex"></span><span class="cb"></span><span class="fi"></span><span>Country</span></div>
      <div class="tr"><span class="ex"><svg class="ex-i"><use href="#chr"/></svg></span><span class="cb"></span><svg class="fi"><use href="#cal"/></svg><span>Date</span></div>
      <div class="tr"><span class="ex"></span><span class="cb"></span><span class="fi"></span><span>Discount Band</span></div>
      <div class="tr"><span class="ex"></span><span class="cb"></span><svg class="fi"><use href="#sig"/></svg><span>Discounts</span></div>
      <div class="tr"><span class="ex"></span><span class="cb"></span><svg class="fi"><use href="#sig"/></svg><span>Gross Sales</span></div>
      <div class="tr"><span class="ex"></span><span class="cb"></span><svg class="fi"><use href="#sig"/></svg><span>Manufacturin...</span></div>
      <div class="tr"><span class="ex"></span><span class="cb"></span><span class="fi"></span><span>Product</span></div>
      <div class="tr"><span class="ex"></span><span class="cb"></span><svg class="fi"><use href="#sig"/></svg><span>Profit</span></div>
      <div class="tr"><span class="ex"></span><span class="cb"></span><svg class="fi"><use href="#sig"/></svg><span>Sale Price</span></div>
      <div class="tr"><span class="ex"></span><span class="cb"></span><span class="fi"></span><span>Segment</span></div>
      <div class="tr"><span class="ex"></span><span class="cb"></span><svg class="fi"><use href="#sig"/></svg><span>Units Sold</span></div>
      <div class="th"><svg class="t-ch"><use href="#chd"/></svg><svg class="t-ic"><use href="#tbl"/></svg><span>Sheet1</span></div>
      <div class="tr"><span class="ex"></span><span class="cb"></span><svg class="fi"><use href="#sig"/></svg><span>Sales</span></div>
      <div class="tr"><span class="ex"></span><span class="cb"></span><svg class="fi"><use href="#sig"/></svg><span>COGS</span></div>
      <div class="tr"><span class="ex"></span><span class="cb"></span><span class="fi"></span><span>Country</span></div>
      <div class="tr"><span class="ex"><svg class="ex-i"><use href="#chr"/></svg></span><span class="cb"></span><svg class="fi"><use href="#cal"/></svg><span>Date</span></div>
      <div class="tr"><span class="ex"></span><span class="cb"></span><span class="fi"></span><span>Discount Band</span></div>
      <div class="tr"><span class="ex"></span><span class="cb"></span><svg class="fi"><use href="#sig"/></svg><span>Discounts</span></div>
      <div class="tr"><span class="ex"></span><span class="cb"></span><svg class="fi"><use href="#sig"/></svg><span>Gross Sales</span></div>
      <div class="tr"><span class="ex"></span><span class="cb"></span><svg class="fi"><use href="#sig"/></svg><span>Manufacturin...</span></div>
    </div>
    <div class="d-sb"></div>
  </aside>
</main>

<footer class="status">
  <span class="st-page">Page 2 of 2</span>
  <div class="zoom">
    <span class="z-m">-</span>
    <div class="z-track"><i class="z-th"></i><i class="z-tick"></i></div>
    <span class="z-p">+</span>
    <span class="z-v">80%</span>
    <svg class="z-fit" viewBox="0 0 20 15"><rect x=".7" y=".7" width="18.600" height="13.600" fill="#e6e4e2" stroke="#8a8886" stroke-width="1.200"/><path d="M3.500 5.500V3h3M13.500 3h3v2.500M16.500 9.500V12h-3M6.500 12h-3V9.500" fill="none" stroke="#333"/></svg>
  </div>
</footer>

<footer class="taskbar">
  <div class="tk-left">
    <svg class="tk tk-win" viewBox="0 0 30 30"><defs><linearGradient id="win" x1="0" y1="0" x2="1" y2="1"><stop offset="0" stop-color="#5cd1f5"/><stop offset="1" stop-color="#0a6fd0"/></linearGradient></defs><path d="M1 0h13v14.400H0V1zM15.200 0H29l1 1v13.400H15.200zM0 15.600h14V30H1l-1-1zM15.200 15.600H30V29l-1 1H15.200z" fill="url(#win)"/></svg>
    <svg class="tk tk-view" viewBox="0 0 30 30"><rect x="1" y="7" width="22" height="22" rx="2" fill="#222"/><rect x="7" y="1" width="22" height="21" rx="2" fill="#fff" fill-opacity=".75"/></svg>
    <svg class="tk tk-fold" viewBox="0 0 30 30"><path d="M0 4c0-1 1-2 2-2h9l3 3h-14z" fill="#d99e15"/><path d="M0 5h30v23c0 1-1 2-2 2H2c-1 0-2-1-2-2z" fill="#fdd65e"/><path d="M6 19h18l1 11H5z" fill="#1a83d4"/><path d="M10 23h10" stroke="#0d4a80" stroke-width="1.500"/></svg>
    <svg class="tk tk-chr" viewBox="0 0 30 30"><circle cx="15" cy="15" r="15" fill="#fbc02d"/><path d="M15 0a15 15 0 0 1 13 7.500H15a7.500 7.500 0 0 0-6.500 3.750L2 3.800A15 15 0 0 1 15 0z" fill="#e33b2e"/><path d="M2 3.800l6.500 11.200A7.500 7.500 0 0 0 15 22.500L8.500 28.500A15 15 0 0 1 2 3.800z" fill="#2ea043"/><circle cx="15" cy="15" r="7" fill="#fff"/><circle cx="15" cy="15" r="5.500" fill="#1a73e8"/></svg>
    <i class="tk-dot"></i>
    <div class="tk-pbi">
      <svg class="tk tk-pb" viewBox="0 0 30 30"><rect width="30" height="30" fill="#0b78d6"/><rect x="16" y="0" width="10" height="30" fill="#c28f12"/><rect x="9" y="8" width="12" height="22" fill="#f2c93a"/><rect x="3" y="15" width="11" height="15" fill="#f8e27c"/></svg>
      <i class="tk-bar"></i>
    </div>
  </div>
  <div class="tray">
    <svg class="tr-i tr-car" viewBox="0 0 14 8"><path d="M1 7l6-6 6 6" fill="none" stroke="#222" stroke-width="1.400"/></svg>
    <svg class="tr-i tr-cld" viewBox="0 0 22 20"><path d="M5 15c-5 0-5-6 0-7 2-5 9-5 11-1 5 0 6 7 1 8z" fill="#9a9a9a" stroke="#222" stroke-width="1.200"/><path d="M4 2l15 16" stroke="#222" stroke-width="1.400"/></svg>
    <svg class="tr-i tr-syn" viewBox="0 0 20 20"><path d="M1 9c1-8 11-9 15-3M15 1v5h-5M2 14h6M2 14v5" fill="none" stroke="#222" stroke-width="1.200"/><path d="M2 14c2 3 4 4 7 4" fill="none" stroke="#222" stroke-width="1.200"/><circle cx="14.500" cy="14.500" r="5" fill="#f79a0d"/></svg>
    <div class="tr-lang"><span>ENG</span><span>IN</span></div>
    <svg class="tr-i tr-wifi" viewBox="0 0 20 16"><path d="M1 5c5-5 13-5 18 0M4 8.500c3-3 9-3 12 0M7 11.500c2-1.500 4-1.500 6 0" fill="none" stroke="#222" stroke-width="1.200"/><circle cx="10" cy="14.500" r="1.300" fill="#222"/></svg>
    <svg class="tr-i tr-spk" viewBox="0 0 20 16"><path d="M1 5h3l5-4v14l-5-4H1z" fill="none" stroke="#222" stroke-width="1.100"/><path d="M12 5c1 2 1 4 0 6M15 3c2 3 2 7 0 10M18 1c3 4 3 10 0 14" fill="none" stroke="#222" stroke-width="1.100"/></svg>
    <svg class="tr-i tr-bat" viewBox="0 0 20 12"><rect x=".6" y=".6" width="16.800" height="10.800" rx="2.500" fill="none" stroke="#222" stroke-width="1.200"/><rect x="3" y="3" width="8" height="6" fill="#222"/><path d="M18.500 4v4" stroke="#222" stroke-width="2"/></svg>
    <div class="tr-time"><span>11:46 PM</span><span>31-07-2024</span></div>
    <svg class="tr-i tr-bell" viewBox="0 0 18 20"><path d="M9 1c-4 0-6 3-6 6v4l-2 3h16l-2-3V7c0-3-2-6-6-6z" fill="#0b4ea8"/><path d="M6 16c1 3 5 3 6 0z" fill="#0b4ea8"/></svg>
  </div>
</footer>
</body>
</html>
```
FILE: styles.css
```css
*{box-sizing:border-box}
html,body{margin:0;padding:0}
body{width:1920px;height:1080px;overflow:hidden;font-family:"Open Sans","Noto Sans",sans-serif;color:#323130;display:flex;flex-direction:column;background:#f3f2f1}
.defs{position:absolute;width:0;height:0}
svg{display:block;flex:none}

/* title bar */
.titlebar{height:43px;background:#3b3a39;display:flex;align-items:center;color:#fff;position:relative;flex:none}
.qa{display:flex;align-items:center;padding-left:22px}
.qa-save{width:18px;height:18px}
.qa-undo{width:16px;height:18px;margin-left:20px}
.qa-redo{width:16px;height:18px;margin-left:21px}
.doc-title{position:absolute;left:0;top:0;line-height:43px;text-align:center;font-size:14px;width:1765px}
.win{margin-left:auto;display:flex;align-items:center;z-index:1}
.signin{font-size:14.500px}
.avatar{width:25px;height:25px;margin-left:13px;margin-right:40px}
.wc{width:13px;height:13px}
.wc-min{margin-right:42px}
.wc-max{margin-right:42px}
.wc-x{margin-right:21px}

/* ribbon */
.ribbon{height:157px;background:#fafafa;position:relative;flex:none;z-index:3;box-shadow:0 1px 4px rgba(0,0,0,.2)}
.tabs{display:flex;gap:39px;padding-left:28px;height:38px;align-items:center;font-size:16.800px;color:#252423}
.tab-on{font-size:16px;font-weight:600;color:#201f1e;position:relative;margin-left:9px}
.tab-on::after{content:"";position:absolute;left:0;right:0;top:25px;height:3px;background:#117865}
.share{position:absolute;left:1808px;top:5px;width:105px;height:30px;background:#117865;border-radius:4px;color:#fff;display:flex;align-items:center;font-size:14.500px;padding-left:8px}
.share-i{width:20px;height:18px;margin-right:10px}
.share-c{width:13px;height:8px;margin-left:5px}
.rb-body{display:flex;height:110px;margin-top:7px}
.grp{border-right:1px solid #d2d0ce;display:flex;flex-direction:column;height:110px;flex:none}
.grp-main{flex:1;min-height:0;display:grid;padding-top:5px}
.grp-name{font-size:12px;line-height:14px;height:13px;text-align:center;color:#605e5c;flex:none}
.g-clip{width:201px}.clip-main{grid-template-columns:70px 1fr}
.g-data{width:459px}.data-main{grid-template-columns:64px 58px 91px 38px 62px 57px 83px;padding-left:3px}
.g-query{width:145px}.query-main{grid-template-columns:88px 36px;padding-left:2px}
.g-ins{width:184px}.ins-main{grid-template-columns:50px 50px 60px;padding-left:11px}
.g-calc{width:143px}.calc-main{grid-template-columns:62px 60px;padding-left:10px}
.g-sens{width:91px}.sens-main{grid-template-columns:1fr}
.g-share{width:74px}.share-main{grid-template-columns:1fr}
.g-cop{width:74px}.cop-main{grid-template-columns:1fr}
.rb{display:flex;flex-direction:column;align-items:center;font-size:14px;line-height:20px;text-align:center;white-space:nowrap;color:#3b3a39;min-width:0}
.rb .ic{width:40px;height:40px;margin-bottom:4px}
.off,.off span{color:#b8b6b4}
.rb-paste .ic{width:36px}
.clip-list{display:flex;flex-direction:column;margin-top:-6px;font-size:14px}
.clip-it{display:flex;align-items:center;height:30px;color:#b8b6b4}
.ci{width:16px;height:20px;margin-right:4px;margin-left:-3px}
.dd{display:inline-block;width:8px;height:6px;margin-left:3px;vertical-align:1px}
.dd-off{opacity:.3}
.xl{font:700 13px "Liberation Sans",sans-serif;fill:#fff;text-anchor:middle}
.tb{font:400 26px "Open Sans",sans-serif;fill:#2b88d8;text-anchor:middle}
.collapse{position:absolute;left:1903px;top:143px;width:10px;height:6px}

/* main */
.main{height:790px;display:flex;flex:none;position:relative}
.rail{width:51px;flex:none;background:#f3f2f1;border-right:1px solid #e1dfdd}
.rail-b{height:50.500px;display:flex;align-items:center;justify-content:center;border-left:3px solid transparent}
.rail-on{border-left-color:#117865;height:49px}
.rail-i{width:20px;height:20px;margin-left:-3px}
.dax{font:700 6.500px "Liberation Sans",sans-serif;fill:#555;text-anchor:middle}
.center{width:1417px;flex:none;display:flex;flex-direction:column}
.canvas{height:746px;background:#a0a6d6;padding:12px 0 0 67px;overflow:hidden;flex:none}
.page{position:relative;width:1283px;height:722px;border:1px dotted #555}

.kpi{position:absolute;top:0;height:119px;border:9.500px solid #fff;border-radius:24px;background:#a0a6d6;box-shadow:4px 5px 7px rgba(40,40,70,.55);padding:10px 0 0 11px}
.kpi-1{left:1px;width:311px}
.kpi-2{left:323px;width:310px}
.kpi-3{left:644px;width:312px}
.kpi-4{left:971px;width:310px}
.kpi-l{font-size:20px;line-height:26px;font-weight:700;color:#252423}
.kpi-v{font-family:Roboto,sans-serif;font-size:53px;line-height:50px;text-align:center;color:#252423;margin:1px 0 0 -11px;transform:scaleX(.935)}
.kpi-wide{transform:none;letter-spacing:-.2px}

.chart-card{position:absolute;left:2px;top:134px;width:726px;height:260px;border:5px solid #fff;border-radius:22px;background:#f4c3ae;box-shadow:4px 10px 6px rgba(0,0,0,.92)}
.chart-title{position:relative;z-index:1;margin:1px -4px 0 -1px;padding:1px 0 0 2px;font-size:17.500px;font-weight:700;line-height:22px;height:28px;white-space:nowrap;color:#252423;border-bottom:2px solid #c7a090}
.chart-svg{position:absolute;left:-10px;top:-10px;width:736px;height:270px;overflow:visible}
.c-us{fill:#e645ac}.c-mx{fill:#6b007b}.c-de{fill:#e66c37}.c-fr{fill:#12239e}.c-ca{fill:#118dff}
.area{fill:#114b45;fill-opacity:.4}
.plate rect{fill:#fff;fill-opacity:.6}
.ln-dk{fill:none;stroke:#0f4a44;stroke-width:3}
.mk-dk{fill:#0f4a44}
.ln-gr{fill:none;stroke:#1aaa3e;stroke-width:3}
.mk-gr{fill:#11993c}
.dl text{font-size:11.500px;fill:#6f6c6a;text-anchor:middle}
.ax text{font-size:11.800px;font-weight:600;fill:#605e5c;text-anchor:middle}
.ax-t{font:700 10.400px "DejaVu Sans",sans-serif;fill:#252423;text-anchor:middle}
.ax-s{font-size:10px}
.ax-y{font-size:10.500px;fill:#777;text-anchor:middle}
.yt{stroke:#d9b0a0;stroke-dasharray:1 2;fill:none}
.gridl path{stroke:#d9ac9a;stroke-dasharray:1 3;fill:none}
.sb{fill:#f0d8cb}
.sb-t{fill:#bcaaa0;stroke:#fff;stroke-width:.8}
.lg{font-size:11.500px;fill:#777}
.lg-h{font-weight:700;fill:#605e5c}
.lg-p,.lg-g,.lg-d{fill:none;stroke-width:2.500}
.lg-p{stroke:#5a2d91}.lg-g{stroke:#1aaa3e}.lg-d{stroke:#0f4a44}

.map-card{position:absolute;left:738px;top:134px;width:542px;height:260px;background:#fff;border-radius:18px;padding:9px 12px 0 12px;box-shadow:-1px -2px 4px rgba(90,90,130,.4)}
.map-title{text-align:center;font-size:20px;font-weight:700;line-height:28px;color:#252423}
.map-rule{height:5.500px;background:#3aa3ff}
.map-svg{width:516px;height:200px;margin-top:3px}
.sea{fill:#303030}
.land{fill:#020202}
.bb-b{fill:#82bcf0;fill-opacity:.68;stroke:#82bcf0;stroke-width:1}
.bb-g{fill:#aaa;fill-opacity:.42;stroke:#999;stroke-opacity:.5;stroke-width:1.500}
.m-l text{font:400 10px Roboto,sans-serif;fill:#8a8a8a;letter-spacing:.1px}
.m-o text{font:italic 400 10px Roboto,sans-serif;fill:#7a7a7a;letter-spacing:1px}
.m-b{font:400 8.500px "Open Sans",sans-serif;fill:#eee}
.m-c{font:400 8.300px "Open Sans",sans-serif;fill:#fff;paint-order:stroke;stroke:#000;stroke-width:.6}
.m-t{font:400 8.300px "Open Sans",sans-serif;fill:#cdd7ff;text-decoration:underline}

.donut-card{position:absolute;left:1px;top:426px;width:506px;height:294px;border:4.500px solid #fff;border-radius:24px;box-shadow:4px 2px 4px rgba(0,0,0,.85)}
.donut-svg{position:absolute;left:-9.500px;top:-9.500px;width:516px;height:304px}
.do-t{font-size:17.800px;font-weight:700;fill:#fff;text-anchor:middle}
.do-h{font-size:13px;font-weight:700;fill:#fff}
.do-li{font-size:13px;font-weight:700;fill:#fff}
.do-v text{font-size:12.500px;font-weight:600;fill:#fff}
.ring circle{fill:none;stroke-width:38.300}
.r-us{stroke:#e645ac}.r-fr{stroke:#12239e}.r-ca{stroke:#118dff}.r-de{stroke:#e66c37}.r-mx{stroke:#6b007b}
.lead polyline{fill:none;stroke:#6f7090;stroke-width:1}

.slicer{position:absolute;left:534px;top:426px;width:253px;height:293px;border:3px solid #fff;border-radius:26px}
.sl-title{text-align:center;color:#fff;font-size:21.400px;font-weight:700;line-height:30px;margin:9px 0 0 5px;height:29px}
.sl-list{position:relative;height:237.700px;overflow:hidden}
.sl-row{display:flex;height:41.700px;align-items:flex-start;padding-left:20px}
.sl-ch{width:19.500px;height:11px;margin-top:17px;flex:none}
.sl-cb{width:21px;height:20.700px;margin:15.300px 8px 0 9px;border:1px solid #7a7878;flex:none}
.sl-part{background:#a0a6d6;position:relative}
.sl-part::after{content:"";position:absolute;left:4px;top:4px;right:4px;bottom:4px;background:#7a7a7a}
.sl-full{background:#222;border-color:#222}
.sl-lb{width:159px;height:41.700px;border-bottom:5.700px solid #fff;color:#fff;font-size:20.300px;font-weight:700;line-height:28px;padding-top:8px;white-space:nowrap}
.sl-sb{position:absolute;left:228px;top:4px;width:8px;height:184px;background:#8b8b9d;opacity:.45}

.seg{position:absolute;left:832px;top:427px;width:278px;height:292px;border:5px solid #fff;border-radius:26px}
.seg-title{text-align:center;color:#fff;font-size:20px;font-weight:700;line-height:30px;height:30px;margin-left:4px}
.seg-c{margin:0 0 17.300px 2px;border-left:2px solid #8d92c4;padding-left:7px;height:67.700px}
.seg-c:nth-child(4){margin-top:3px}
.seg-h{font-size:14px;line-height:22px;color:#1f2a5c;margin-top:-1px}
.seg-n{font-size:15px;line-height:22px;color:#252423;white-space:nowrap}
.seg-n:nth-child(2){margin-top:1.200px}
.seg-sb{position:absolute;left:256.500px;top:31px;width:8px;height:180px;background:#8b8b9d;opacity:.5}

.pbtn{position:absolute;left:1125.500px;width:128px;display:flex;align-items:center;justify-content:center;color:#fff;font-weight:700;border:3px solid #eff0fa;border-radius:28px}
.pbtn-reset{top:416px;height:113px;font-size:25px}
.pbtn-next{top:589px;height:118px;font-size:17.800px}

/* page tabs */
.pagebar{height:44px;background:#f3f2f1;display:flex;flex:none}
.pb-views{width:159px;position:relative;border-right:1px solid #b5b3b1;flex:none;display:flex}
.pb-desk{width:30px;margin-left:13px;height:37.500px;padding-top:9px;border-bottom:3px solid #117865;border-radius:0 0 1px 1px;display:flex;justify-content:center}
.pb-d{width:24px;height:18px}
.pb-p{width:15px;height:25px;margin:6px 0 0 32px}
.pb-a{width:6px;height:10px;margin:16px 0 0 27px}
.pb-r{margin-left:22px}
.pg-tab{width:95px;background:#fff;display:flex;align-items:center;justify-content:center;font-size:14.200px;color:#252423;border-right:1px solid #e1dfdd;position:relative;flex:none;padding-left:2px}
.pg-on{border-bottom:5px solid #117865;border-right:none;padding-top:3px}
.pg-x{position:absolute;left:83px;top:1px;font-size:13px}
.pg-add{width:49px;background:#117865;color:#fff;font-size:26px;font-weight:700;line-height:42px;text-align:center}

/* panes */
.viz{width:226px;flex:none;background:#f3f2f1;border-left:1px solid #e1dfdd;border-right:1px solid #d8d6d4;position:relative}
.data{width:226px;flex:none;background:#f3f2f1;position:relative}
.pane-h{display:flex;align-items:center;height:28px;margin-top:11px;font-size:18.800px;font-weight:600;color:#252423;position:relative}
.viz .pane-h{padding-left:10.300px}
.data .pane-h{padding-left:11px}
.dbl{width:15px;height:15px;position:absolute;left:200px;top:6px}
.viz-sub{font-size:14px;line-height:20px;margin:9px 0 0 10px;color:#323130;font-weight:500}
.viz-tabs{height:40px;margin-top:4px;position:relative;padding-left:10px}
.vt-on{width:40px;height:40px;background:#c8c8c8;border-radius:2px;padding:3.500px 5px}
.vt-i{width:30px;height:34px}
.vt-f{position:absolute;left:98px;top:5px;width:30px;height:30px}
.vt-sep{position:absolute;left:0;top:43px;width:225px;height:12px}
.vgrid{display:grid;grid-template-columns:repeat(6,35px);grid-auto-rows:35px;margin:24px 0 0 7.800px;justify-items:center;align-items:center}
.vi{width:23px;height:23px}
.s{fill:none;stroke:#444;stroke-width:1.400}
.sb2{fill:none;stroke:#2b88d8;stroke-width:1.400}
.b{fill:#3a96dd}.l{fill:#8ac0ee}.g{fill:#bbb}.d{fill:#444}.w{fill:#fff;stroke:#444}
.v123{font:400 9px "Open Sans",sans-serif;fill:#2b88d8;text-anchor:middle}
.vR{font:700 19px "Open Sans",sans-serif;fill:#1f72b8;text-anchor:middle}
.vPy{font:700 17px "Open Sans",sans-serif;fill:#2b88d8;text-anchor:middle}
.v-more{font-size:14px;font-weight:700;line-height:10px;letter-spacing:2.400px;margin:4px 0 0 16px;height:26px;color:#333}
.vbox{border-top:2px solid #e1dfdd;margin-top:6px}
.v-lab{font-size:14px;line-height:20px;padding-left:15px}
.v-values{margin-top:13.500px}
.v-drill{font-weight:500;font-size:14.300px;margin-top:15px}
.well{margin-left:5px;width:213px;background:#fff;border:1px dashed #c8c6c4;font-size:14px;color:#323130;display:flex;align-items:center}
.well-a{height:34px;padding-left:13px;margin-top:6px}
.well-b{height:31.400px;padding-left:10px;margin-top:14px;white-space:nowrap;font-size:14.200px}
.opt{display:flex;justify-content:space-between;align-items:center;padding:0 26px 0 15px;font-size:14px;height:20px}
.opt-a{margin-top:11px}
.opt-b{margin-top:14px}
.tg{width:40px;height:20px;border-radius:10px;display:flex;align-items:center;font-size:11.500px;gap:2px}
.tg i{width:10px;height:10px;border-radius:50%;display:block}
.tg-off{background:#fff;border:1px solid #8a8886;padding-left:5px;color:#605e5c}
.tg-off i{background:#555}
.tg-on{background:#117865;color:#fff;padding-left:5px}
.tg-on i{background:#fff}

.search{margin:18px 0 0 6px;width:213.500px;height:30px;background:#fff;border:1px solid #d2d0ce;border-bottom:1.500px solid #6d6b69;border-radius:5px;display:flex;align-items:center;padding-left:15px;font-size:16px;color:#605e5c}
.search span{padding-top:2px}
.s-ic{width:18px;height:18px;margin-right:9px}
.tree{height:681.300px;overflow:hidden;margin-top:11px;font-size:14px;color:#484644}
.th,.tr{display:flex;align-items:center;height:30px}
.th{padding-left:18px}
.t-ch{width:13px;height:8px;margin-right:7px}
.t-ic{width:15px;height:15px;margin-right:7px}
.ex{width:55px;padding-left:38px;display:block}
.ex-i{width:8px;height:14px}
.cb{width:15px;height:15px;border:1px solid #8a8886;border-radius:2px;margin-right:11px;flex:none}
.fi{width:13px;height:15px;margin-right:9px;flex:none;display:block}
.d-sb{position:absolute;left:211px;top:97px;width:10px;height:500px;background:#c8c8c8}

/* status */
.status{height:30px;flex:none;background:#f3f2f1;border-top:1px solid #d8d6d4;border-bottom:1px solid #111;display:flex;align-items:center;position:relative;font-size:14px;color:#484644}
.st-page{margin-left:5px}
.zoom{margin-left:auto;display:flex;align-items:center;position:relative;padding-right:23px}
.z-m{font-weight:700;font-size:14px;width:9px;margin-right:4px;color:#605e5c}
.z-track{width:125px;height:1px;background:#605e5c;position:relative}
.z-th{position:absolute;left:46px;top:-6px;width:5px;height:13px;background:#605e5c}
.z-tick{position:absolute;left:62px;top:-3px;width:1px;height:7px;background:#605e5c}
.z-p{font-size:19px;margin-left:6px;color:#605e5c;width:12px;line-height:20px}
.z-v{margin-left:14px;font-size:14.500px;color:#605e5c;width:36px}
.z-fit{width:20px;height:15px;margin-left:16px}

/* taskbar */
.taskbar{height:60px;flex:none;background:#d3e0f7;display:flex;align-items:center;justify-content:space-between;position:relative}
.tk-left{display:flex;align-items:center;padding-left:26px;position:relative;height:60px}
.tk{width:30px;height:30px}
.tk-view{margin-left:26px}
.tk-fold{margin-left:25px}
.tk-chr{margin-left:25px}
.tk-dot{position:absolute;left:204px;top:50px;width:8px;height:4px;background:#777;border-radius:2px}
.tk-pbi{width:43px;height:48px;margin-left:16px;background:#e8eefb;border-radius:4px;box-shadow:2px 0 0 #dfe7f9,0 0 1px #c7d2ea;padding:9px 0 0 9px;position:relative}
.tk-bar{position:absolute;left:14px;top:44px;width:20px;height:4px;background:#0078d4;border-radius:2px}
.tray{display:flex;align-items:center;padding-right:26px;font-size:14px;color:#222}
.tr-i{flex:none}
.tr-car{width:14px;height:8px}
.tr-cld{width:22px;height:20px;margin-left:22px}
.tr-syn{width:20px;height:20px;margin-left:19px}
.tr-lang{display:flex;flex-direction:column;align-items:center;line-height:20px;font-size:13.500px;margin-left:23px;width:30px}
.tr-wifi{width:20px;height:16px;margin-left:22px}
.tr-spk{width:20px;height:16px;margin-left:10px}
.tr-bat{width:20px;height:12px;margin-left:10px}
.tr-time{display:flex;flex-direction:column;align-items:flex-end;line-height:20px;font-size:14px;margin-left:21px;letter-spacing:.4px}
.tr-bell{width:18px;height:20px;margin-left:10px}
```
